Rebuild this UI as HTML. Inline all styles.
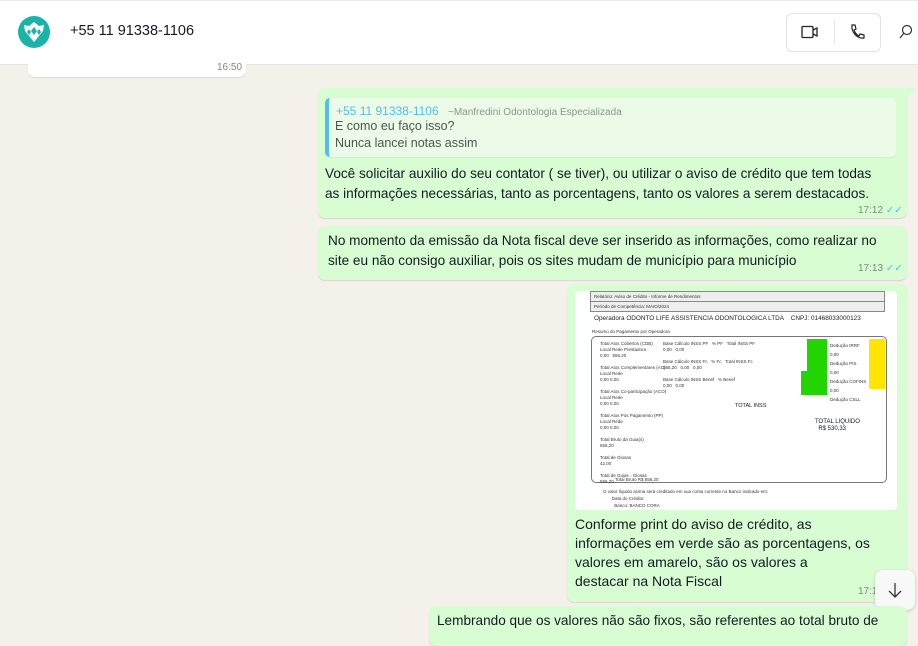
<!DOCTYPE html>
<html><head><meta charset="utf-8"><style>
*{margin:0;padding:0;box-sizing:border-box}
body{width:918px;height:627px;overflow:hidden;background:#f4f0ea;font-family:"Liberation Sans",sans-serif;position:relative;color:#111b21}
.a{position:absolute;white-space:nowrap}
.hdr{position:absolute;left:0;top:0;width:918px;height:65px;background:#fff;border-bottom:1px solid #e4e4e4;border-top:1px solid #e8e8e8}
.b{position:absolute;background:#d9fdd3;border-radius:7px;box-shadow:0 1px 1px rgba(0,0,0,.12)}
.t{font-size:13.6px;line-height:20px}
.tm{font-size:10px;color:#7c8a80}
.tick{color:#53bdeb;font-size:10px}
.s{font-size:4.5px;color:#333}
</style></head><body>
<div class="hdr"></div>
<svg class="a" style="left:18px;top:16px" width="32" height="32" viewBox="0 0 32 32"><circle cx="16" cy="16" r="16" fill="#1bb3a8"/><path d="M16 6l5 4 5-1-1 6-9 11-9-11-1-6 5 1z" fill="#fff"/><path d="M16 11l3 4-3 4-3-4zM11 13l2 3-2 3-2-3zM21 13l2 3-2 3-2-3z" fill="#1bb3a8"/></svg>
<div class="a" style="left:70px;top:23px;font-size:14.5px">+55 11 91338-1106</div>
<div class="a" style="left:786px;top:13px;width:95px;height:39px;border:1px solid #e2e2e2;border-radius:6px"></div>
<div class="a" style="left:834px;top:20px;width:1px;height:24px;background:#e8e8e8"></div>
<svg class="a" style="left:801px;top:25px" width="18" height="14" viewBox="0 0 18 14"><rect x="1" y="1.5" width="11" height="11" rx="1" fill="none" stroke="#222" stroke-width="1.3"/><path d="M12 5l4-2v8l-4-2" fill="none" stroke="#222" stroke-width="1.3"/></svg>
<svg class="a" style="left:849px;top:23px" width="16" height="18" viewBox="0 0 16 18"><path d="M3 2l3 0 1 4-2 1c1 3 3 5 5 6l1-2 4 1v3c-7 1-13-6-12-13z" fill="none" stroke="#222" stroke-width="1.2"/></svg>
<svg class="a" style="left:898px;top:24px" width="16" height="16" viewBox="0 0 16 16"><circle cx="9" cy="6" r="4.5" fill="none" stroke="#333" stroke-width="1.2"/><path d="M6 9l-4 5" stroke="#333" stroke-width="1.2"/></svg>
<div class="a" style="left:28px;top:60px;width:218px;height:17px;background:#fff;border-radius:0 0 7px 7px;box-shadow:0 1px 1px rgba(0,0,0,.1)"></div>
<div class="a tm" style="left:217px;top:62px">16:50</div>

<div class="b" style="left:318px;top:88px;width:589px;height:130px;border-top-right-radius:0"></div>
<svg class="a" style="left:906px;top:88px" width="9" height="12"><path d="M0 0h9L0 11z" fill="#d9fdd3"/></svg>
<div class="a" style="left:325px;top:98px;width:571px;height:59px;background:#ecfbe8;border-radius:5px;border-left:4px solid #53bdeb;box-shadow:0 1px 1px rgba(0,0,0,.06)"></div>
<div class="a" style="left:336px;top:104px;font-size:12px;color:#53bdeb">+55 11 91338-1106 <span style="color:#8a9590;font-size:10px;margin-left:6px">~Manfredini Odontologia Especializada</span></div>
<div class="a" style="left:335px;top:118px;font-size:12.5px;line-height:17px;color:#4a5550">E como eu faço isso?<br>Nunca lancei notas assim</div>
<div class="a t" style="left:325px;top:164px">Você solicitar auxilio do seu contator ( se tiver), ou utilizar o aviso de crédito que tem todas<br>as informações necessárias, tanto as porcentagens, tanto os valores a serem destacados.</div>
<div class="a tm" style="left:858px;top:205px">17:12 <span class="tick">✓✓</span></div>

<div class="b" style="left:318px;top:226px;width:589px;height:54px"></div>
<div class="a t" style="left:328px;top:231px">No momento da emissão da Nota fiscal deve ser inserido as informações, como realizar no<br>site eu não consigo auxiliar, pois os sites mudam de município para município</div>
<div class="a tm" style="left:858px;top:263px">17:13 <span class="tick">✓✓</span></div>

<div class="b" style="left:567px;top:284px;width:340px;height:318px"></div>
<div class="a" style="left:575px;top:291px;width:322px;height:219px;background:#fff;border-radius:4px;overflow:hidden">
 <div class="a" style="left:15px;top:0;width:295px;height:21px;border:1px solid #888;background:#eee"></div>
 <div class="a" style="left:15px;top:10px;width:295px;height:1px;background:#888"></div>
 <div class="a s" style="left:19px;top:3px">Relatório: Aviso de Crédito - Informe de Rendimentos</div>
 <div class="a s" style="left:19px;top:13px">Período de Competência: MAIO/2024</div>
 <div class="a" style="left:19px;top:24px;font-size:6.4px;color:#222">Operadora ODONTO LIFE ASSISTENCIA ODONTOLOGICA LTDA &nbsp;&nbsp; CNPJ: 01468033000123</div>
 <div class="a s" style="left:17px;top:38px">Resumo do Pagamento por Operadora</div>
 <div class="a" style="left:16px;top:45px;width:296px;height:147px;border:1px solid #777;border-radius:5px"></div>
 <div class="a s" style="left:25px;top:50px;line-height:6px">Total Atos Cobertos (CDB)<br>Local Rede Prestadora<br>0,00 &nbsp; 556,20<br><br>Total Atos Complementares (AC)<br>Local Rede<br>0,00 0,00<br><br>Total Atos Co-participação (ACO)<br>Local Rede<br>0,00 0,00<br><br>Total Atos Pós Pagamento (PP)<br>Local Rede<br>0,00 0,00<br><br>Total Bruto da Guia(s)<br>556,20<br><br>Total de Glosas<br>42,00<br><br>Total de Guias - Glosas<br>556,20</div>
 <div class="a s" style="left:88px;top:50px;line-height:6px">Base Cálculo INSS PF &nbsp; % PF &nbsp; Total INSS PF<br>0,00 &nbsp; 0,00<br><br>Base Cálculo INSS Fc &nbsp; % Fc &nbsp; Total INSS Fc<br>556,20 &nbsp; 0,00 &nbsp; 0,00<br><br>Base Cálculo INSS Benef &nbsp; % Benef<br>0,00 &nbsp; 0,00</div>
 <div class="a" style="left:232px;top:48px;width:20px;height:50px;background:#22d400"></div>
 <div class="a" style="left:226px;top:80px;width:26px;height:24px;background:#22d400"></div>
 <div class="a" style="left:294px;top:48px;width:16px;height:50px;background:#ffe500"></div>
 <div class="a s" style="left:255px;top:50px;line-height:9px">Dedução IRRF<br>0,00<br>Dedução PIS<br>0,00<br>Dedução COFINS<br>0,00<br>Dedução CSLL</div>
 <div class="a" style="left:240px;top:128px;font-size:6px;line-height:7px">TOTAL LIQUIDO<br>&nbsp;&nbsp;R$ 530,33</div>
 <div class="a" style="left:160px;top:112px;font-size:5.5px">TOTAL INSS</div>
 <div class="a s" style="left:40px;top:186px">Total Bruto R$ 556,20</div>
 <div class="a s" style="left:28px;top:197px;line-height:7px">O valor líquido acima será creditado em sua conta corrente no Banco indicado em:<br>&nbsp;&nbsp;&nbsp;&nbsp;&nbsp;&nbsp;&nbsp;Data do Crédito:<br>&nbsp;&nbsp;&nbsp;&nbsp;&nbsp;&nbsp;&nbsp;&nbsp;&nbsp;Banco: BANCO CORA</div>
</div>
<div class="a" style="left:575px;top:515px;font-size:14px;line-height:19px">Conforme print do aviso de crédito, as<br>informações em verde são as porcentagens, os<br>valores em amarelo, são os valores a<br>destacar na Nota Fiscal</div>
<div class="a tm" style="left:858px;top:586px">17:14</div>
<div class="a" style="left:875px;top:570px;width:40px;height:40px;background:#f7f8f7;border-radius:8px;box-shadow:0 1px 3px rgba(0,0,0,.2)"></div>
<svg class="a" style="left:886px;top:581px" width="18" height="18" viewBox="0 0 18 18"><path d="M9 2v14M3 10l6 6 6-6" fill="none" stroke="#333" stroke-width="1.3"/></svg>

<div class="b" style="left:429px;top:606px;width:478px;height:40px"></div>
<div class="a t" style="left:437px;top:611px">Lembrando que os valores não são fixos, são referentes ao total bruto de</div>
</body></html>
